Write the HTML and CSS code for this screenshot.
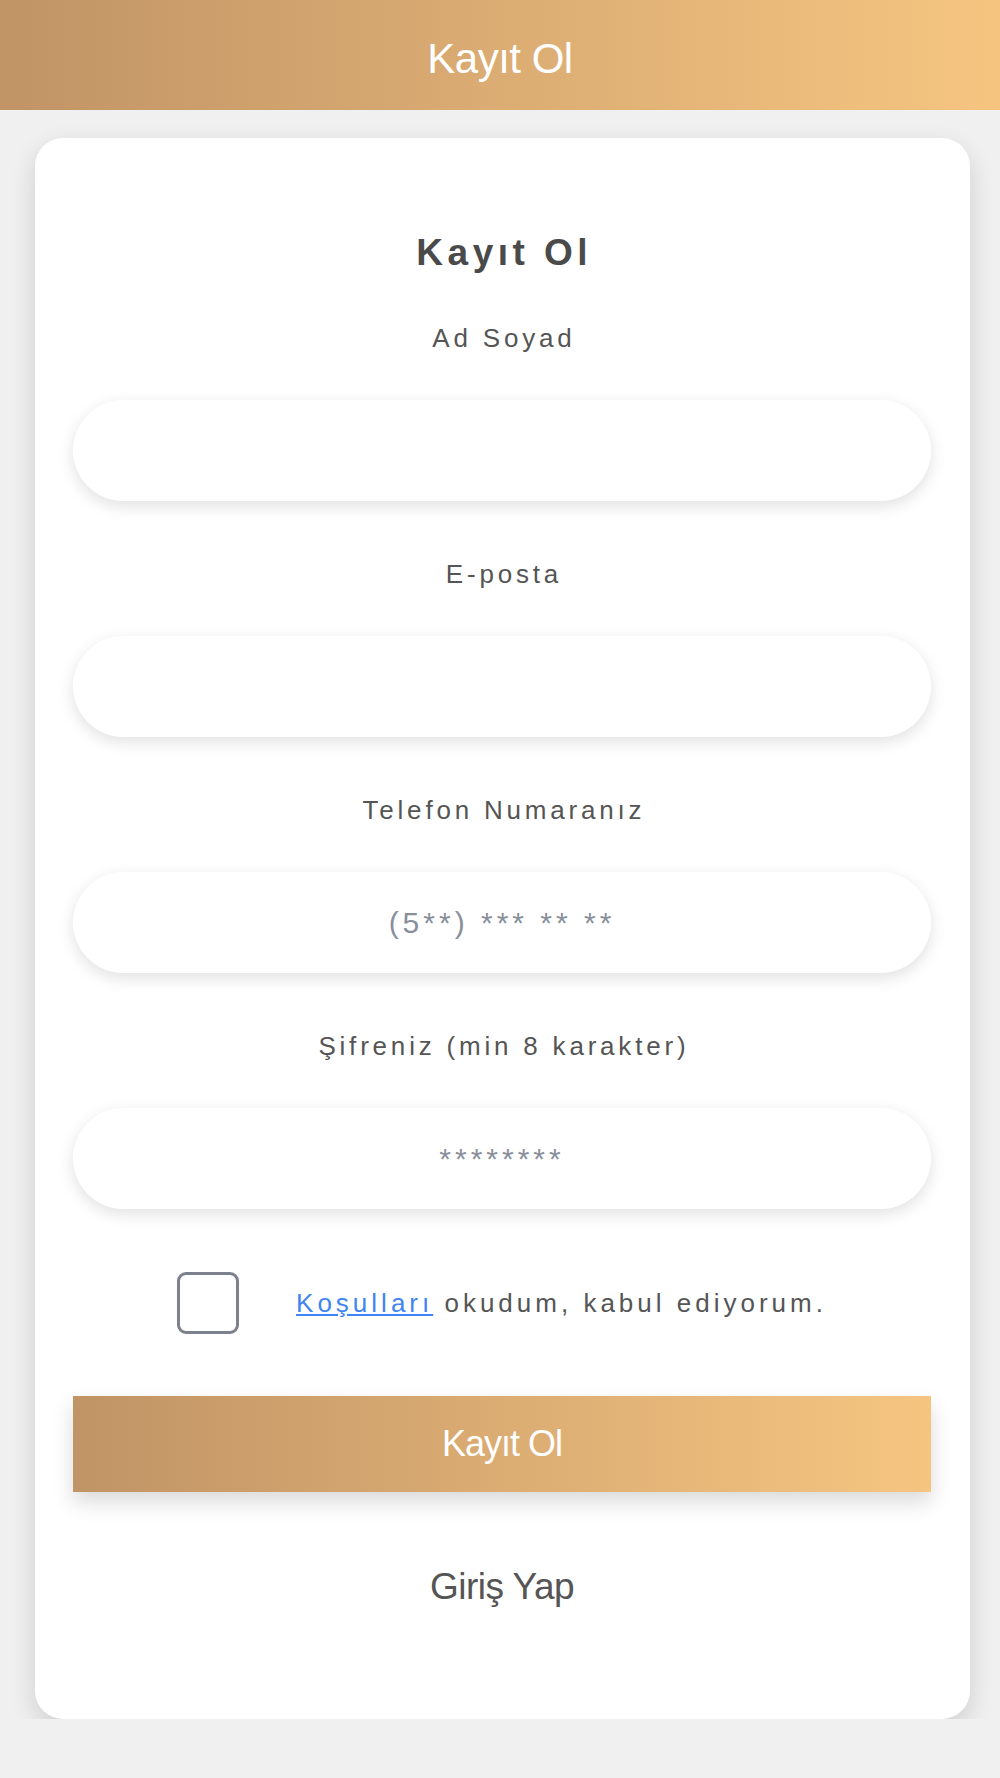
FILE: index.html
```html
<!DOCTYPE html>
<html lang="tr">
<head>
    <meta charset="UTF-8">
    <meta name="viewport" content="width=device-width, initial-scale=1.0">
    <title>Kayıt Ol</title>
    <link rel="stylesheet" href="styles.css">
</head>
<body>
    <div class="topbar">Kayıt Ol</div>

    <div class="card">
        <h1 class="card-title">Kayıt Ol</h1>

        <form class="register-form">
            <div class="field">
                <label class="field-label" for="name">Ad Soyad</label>
                <input class="field-input" type="text" id="name">
            </div>
            <div class="field">
                <label class="field-label" for="email">E-posta</label>
                <input class="field-input" type="email" id="email">
            </div>
            <div class="field">
                <label class="field-label" for="phone">Telefon Numaranız</label>
                <input class="field-input" type="tel" id="phone" placeholder="(5**) *** ** **">
            </div>
            <div class="field">
                <label class="field-label" for="password">Şifreniz (min 8 karakter)</label>
                <input class="field-input" type="password" id="password" placeholder="********">
            </div>

            <div class="terms">
                <input class="terms-check" type="checkbox" id="terms">
                <label class="terms-text" for="terms"><a href="#">Koşulları</a> okudum, kabul ediyorum.</label>
            </div>

            <button class="submit-btn" type="button">Kayıt Ol</button>
        </form>

        <a class="login-link" href="#">Giriş Yap</a>
    </div>
</body>
</html>
```

FILE: styles.css
```css
body {
    margin: 0;
    background-color: #f0f0f0;
    font-family: "Liberation Sans", Arial, sans-serif;
}
.topbar {
    height: 110px;
    box-sizing: border-box;
    padding-top: 8px;
    display: flex;
    justify-content: center;
    align-items: center;
    background: linear-gradient(to right, #c19466, #f5c580); /* altın geçiş */
    color: #fff;
    font-size: 42px;
    letter-spacing: -0.5px;
}
.card {
    margin: 28px 30px 0 35px;
    padding: 93px 39px 110px 38px;
    background-color: #fff;
    border-radius: 28px;
    box-shadow: 0 10px 26px rgba(0, 0, 0, 0.14);
    display: flex;
    flex-direction: column;
}
.card-title {
    margin: 0 0 48px;
    font-size: 37px;
    line-height: 44px;
    font-weight: bold;
    text-align: center;
    color: #4a4a4a;
    letter-spacing: 4.5px;
    padding-left: 4.5px;
}
.register-form {
    display: flex;
    flex-direction: column;
}
.field {
    display: flex;
    flex-direction: column;
}
.field + .field {
    margin-top: 58px;
}
.field-label {
    margin-bottom: 47px;
    font-size: 26px;
    line-height: 30px;
    text-align: center;
    color: #555;
    letter-spacing: 3.8px;
    padding-left: 3.8px;
}
.field-input {
    height: 101px;
    box-sizing: border-box;
    border: none;
    border-radius: 51px;
    background-color: #fff;
    box-shadow: 0 5px 16px rgba(0, 0, 0, 0.12);
    font-family: inherit;
    font-size: 30px;
    letter-spacing: 4px;
    text-align: center;
    color: #444;
    outline: none;
}
.field-input::placeholder {
    color: #8a8f9c;
}
.terms {
    margin-top: 63px;
    display: flex;
    justify-content: center;
    align-items: center;
    gap: 57px;
}
.terms-check {
    appearance: none;
    -webkit-appearance: none;
    margin: 0;
    width: 62px;
    height: 62px;
    box-sizing: border-box;
    border: 3.5px solid #7d818d;
    border-radius: 9px;
    background-color: #fff;
}
.terms-text {
    font-size: 26px;
    color: #555;
    letter-spacing: 4px;
}
.terms-text a {
    color: #3f84f3;
    text-decoration: underline;
}
.submit-btn {
    margin-top: 62px;
    height: 96px;
    width: 100%;
    border: none;
    background: linear-gradient(to right, #c19466, #f5c580);
    color: #fff;
    font-family: inherit;
    font-size: 36px;
    letter-spacing: -1px;
    box-shadow: 0 10px 20px rgba(0, 0, 0, 0.15);
    cursor: pointer;
}
.login-link {
    margin-top: 73px;
    font-size: 37px;
    line-height: 44px;
    text-align: center;
    color: #555;
    letter-spacing: -0.5px;
    text-decoration: none;
}
```
